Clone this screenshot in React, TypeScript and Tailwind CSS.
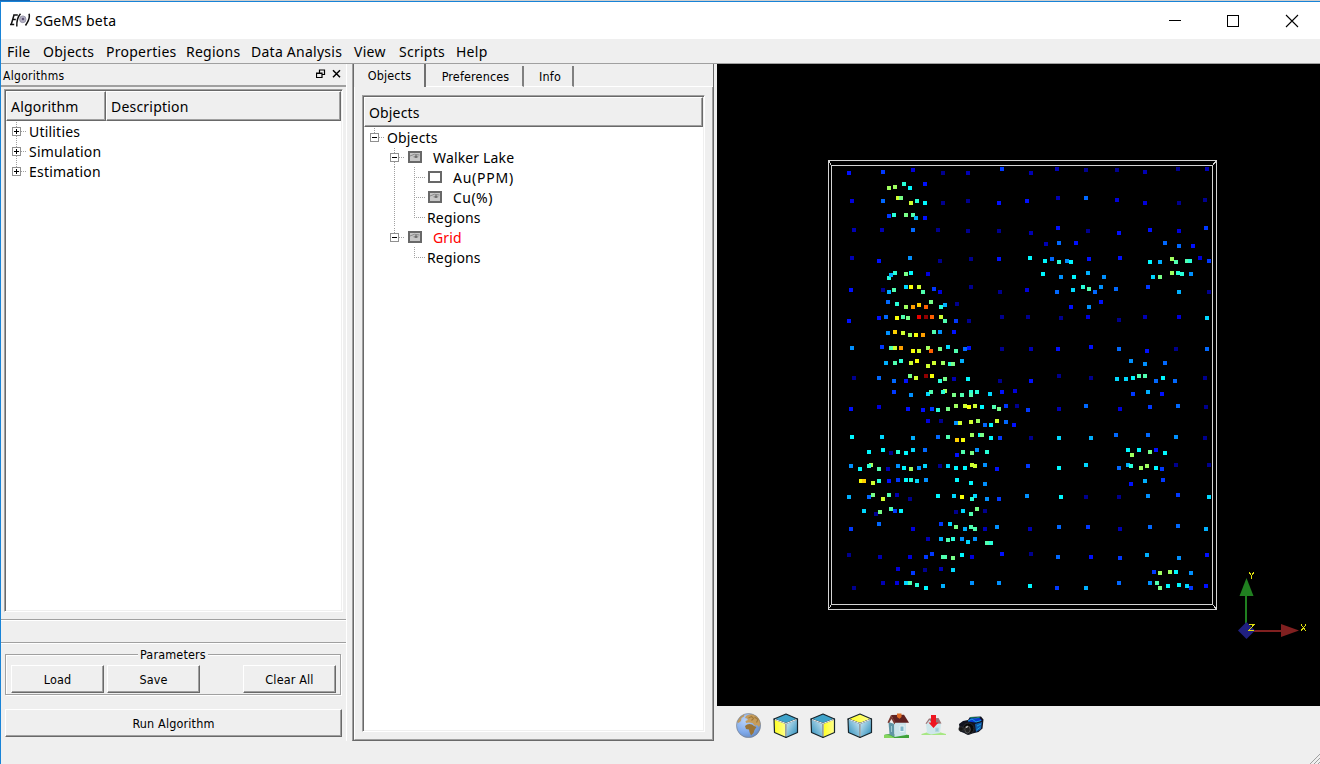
import React from "react";

const JET: Record<string, string> = {
  a: "#00008f", b: "#0000b4", c: "#0000dc", d: "#0010ff", e: "#0038ff", f: "#0068ff", g: "#0090ff",
  h: "#00b0ff", i: "#00d8ff", j: "#00f8ff", k: "#28ffd8", l: "#50ffb0", m: "#78ff88", n: "#a0ff60",
  o: "#d0ff30", p: "#f8ff08", q: "#ffd000", r: "#ffa000", s: "#ff6000", t: "#e80000", u: "#900000",
};

/* Sample positions, in thirds of a pixel from the origin of each tile; the letter is the colour class. */
const TILES = [
  {
    x: 820, y: 155,
    pts: "87,54,d 189,51,e 279,45,c 369,54,a 444,54,b 546,42,e 207,99,n 225,96,n 252,87,k 270,99,j 315,87,d 96,138,c 189,138,f 234,129,o 243,129,m 273,144,o 291,138,k 315,144,j 369,144,a 444,138,a 537,144,d 207,183,e 222,180,k 258,180,m 279,180,l 288,189,h 315,189,d 102,225,b 186,225,b 279,225,f 354,225,a 444,228,a 537,228,a 96,309,b 177,318,d 270,309,g 360,318,a 453,312,a 537,312,d 207,369,k 213,360,h 225,354,k 258,357,m 273,354,j 324,357,c 93,405,d 189,405,a 207,411,h 222,405,l 258,396,i 273,396,p 297,396,o 309,411,l 342,402,e 360,411,c 453,396,a 540,411,a 204,441,f 231,447,k 258,456,n 279,456,r 297,450,q 318,456,s 333,441,m 363,456,k 375,450,h 411,447,a",
  },
  {
    x: 1020, y: 155,
    pts: "33,54,b 111,42,b 198,45,a 291,45,a 375,51,b 474,42,a 561,42,b 21,138,d 114,129,b 198,129,f 291,135,c 375,144,c 477,144,a 555,135,a 33,234,b 114,219,d 204,228,a 297,234,d 390,225,d 477,228,c 558,219,e 78,267,b 117,264,f 168,264,d 435,264,f 477,273,f 519,273,d 30,309,j 75,318,j 96,312,f 117,321,k 141,318,g 153,321,j 207,312,d 300,309,d 390,321,j 420,321,h 456,312,n 468,321,l 501,318,l 510,318,k 540,309,c 567,318,e 69,357,j 123,366,g 162,366,j 204,354,h 252,366,g 399,366,i 420,366,m 456,354,n 474,354,k 486,357,k 513,357,g 21,405,c 111,411,f 159,405,i 189,396,k 207,402,l 225,411,f 243,396,g 288,402,f 384,396,e 477,411,h 567,411,a 153,456,d 207,456,g 243,441,d",
  },
  {
    x: 820, y: 310,
    pts: "87,33,d 177,24,d 198,21,f 231,24,p 249,21,l 264,24,m 297,21,t 318,21,u 336,21,s 363,21,o 375,33,l 408,33,e 447,33,a 546,21,a 204,69,g 225,66,q 249,69,o 270,75,n 288,75,p 309,75,r 342,66,l 360,66,g 402,66,d 96,114,g 186,111,e 213,114,l 225,114,o 243,114,r 279,123,p 297,123,o 324,114,n 333,123,s 360,117,m 384,111,i 408,123,l 435,117,f 447,114,d 546,117,a 198,159,h 225,159,l 243,153,k 273,159,o 291,153,p 324,168,o 342,159,o 369,159,n 390,162,k 399,162,m 426,153,h 102,204,a 177,204,f 222,213,f 258,213,d 270,198,m 288,204,o 318,198,u 336,198,p 360,213,k 375,207,m 402,207,b 444,207,j 540,213,a 222,246,e 273,255,g 324,252,i 333,246,l 375,243,n 369,246,k 402,255,m 426,255,l 453,246,k 453,255,l 471,246,k 510,252,i 546,246,d 585,243,c 93,297,d 177,291,c 264,297,d 309,300,d 336,297,e 354,300,k 384,297,m 408,288,n 435,288,o 447,291,p 465,288,o 486,291,j 522,291,l 537,297,m 558,288,e 591,288,a 324,333,c 363,333,a 408,339,g 420,339,o 453,336,o 474,333,n 495,345,f 513,345,j 531,333,o 558,336,f 582,345,d 96,381,j 186,381,i 279,384,h 354,381,f 384,381,l 411,390,q 429,390,p 456,375,n 480,375,j 486,375,m 513,384,j 540,384,e 147,426,j 189,420,j 213,429,a 234,426,k 258,429,j 279,420,i 315,420,f 411,435,d 429,426,l 456,429,m 471,420,g 501,426,k",
  },
  {
    x: 1020, y: 310,
    pts: "24,21,a 123,24,a 204,21,c 297,30,a 375,21,b 477,21,c 561,24,i 33,117,b 114,117,d 213,111,d 297,117,f 381,123,d 468,117,a 561,117,f 333,153,g 375,162,g 435,159,f 33,213,d 117,198,a 213,204,a 291,207,i 318,207,i 339,204,j 357,198,l 375,198,l 408,213,f 429,204,j 465,213,f 555,204,a 339,252,e 384,246,h 426,252,d 24,300,e 117,297,b 198,288,f 300,297,c 390,291,e 474,288,f 558,291,a 33,384,a 117,384,i 213,384,h 288,375,f 384,375,f 468,381,g 555,384,a 324,420,j 336,435,n 357,420,j 390,426,m 408,420,d 435,429,j",
  },
  {
    x: 820, y: 460,
    pts: "93,18,g 120,27,j 153,15,n 147,18,k 177,27,l 204,27,b 234,18,g 252,24,j 273,27,n 297,24,g 315,18,i 360,18,a 384,18,i 408,24,j 435,24,j 456,15,o 465,18,o 495,15,g 531,27,d 123,63,p 132,63,q 159,69,o 177,63,k 207,63,d 234,60,e 258,60,j 273,60,k 291,63,i 318,60,g 411,60,j 453,69,j 495,72,g 87,111,h 147,111,f 159,105,m 189,117,o 207,105,l 231,105,b 270,117,a 354,108,j 402,108,i 426,111,p 465,108,i 456,117,k 501,117,g 537,117,e 132,153,i 168,162,a 180,156,m 213,147,l 225,153,e 243,153,j 408,156,a 429,153,i 453,162,l 471,147,m 495,153,a 93,207,e 177,192,f 279,207,c 363,192,e 390,192,i 408,201,m 435,207,h 453,201,l 465,207,l 495,207,b 531,201,g 324,237,b 363,237,h 384,240,l 399,237,k 426,237,g 444,246,i 465,237,g 501,249,l 513,249,k 87,285,a 180,291,b 270,291,c 318,291,e 336,282,e 369,291,l 375,291,l 399,294,m 426,285,j 456,291,c 546,282,d 234,327,c 279,339,e 315,330,a 363,327,b 399,330,i 102,384,a 189,369,b 231,369,c 258,369,i 270,369,l 291,375,k 318,384,j 369,378,h 456,369,g 537,369,g",
  },
  {
    x: 1020, y: 460,
    pts: "24,18,e 117,24,j 198,15,i 297,24,f 324,15,h 333,18,k 363,24,n 381,18,n 408,24,j 426,27,e 468,15,a 567,15,a 333,72,d 375,63,h 429,60,e 21,108,g 123,111,j 198,111,a 297,111,a 384,108,g 474,105,e 567,111,i 30,207,b 117,201,f 204,201,e 300,207,b 390,201,f 474,198,f 558,207,h 33,282,a 114,291,f 213,291,d 300,294,e 381,285,h 477,294,g 561,285,d 402,336,e 420,339,n 450,336,n 468,336,j 513,339,g 30,378,j 111,384,e 198,384,h 297,369,f 390,369,g 411,369,l 420,384,m 444,378,j 477,375,j 501,378,i 513,384,e 558,378,d",
  },
];

const SAMPLES = TILES.flatMap((t) =>
  t.pts.split(" ").map((p) => {
    const [x, y, c] = p.split(",");
    return { x: t.x + Math.round(Number(x) / 3) - 2, y: t.y + Math.round(Number(y) / 3) - 2, fill: JET[c] };
  })
);

const MENU = [
  ["File", "w-[36px]"],
  ["Objects", "w-[63px]"],
  ["Properties", "w-[80px]"],
  ["Regions", "w-[65px]"],
  ["Data Analysis", "w-[103px]"],
  ["View", "w-[45px]"],
  ["Scripts", "w-[57px]"],
  ["Help", "w-[40px]"],
];

const SEGOE = "font-['Noto_Sans','Open_Sans',sans-serif]";
const TAHOMA = "font-['DejaVu_Sans_Condensed','DejaVu_Sans',sans-serif] [font-stretch:condensed]";

function AppIcon() {
  return (
    <svg width="22" height="16" viewBox="0 0 22 16" fill="none" stroke="#111" strokeWidth="1.500">
      <path d="M4.200 2h4.600M3.200 6.500h3.600M1 11.500h4.200M5 2 2.200 11.500" />
      <path d="M11.500 .8Q7.500 5 7.800 13.500" />
      <path d="M20 .8Q21.500 5.500 16.500 12.500" />
      <ellipse cx="13.800" cy="6.300" rx="3.200" ry="3.400" fill="#b5b2c4" stroke="#8d8aa0" strokeWidth=".8" />
      <circle cx="14" cy="6" r="1.300" fill="#5e5577" stroke="none" />
    </svg>
  );
}

function Expander({ open, up = true, down = true }: { open: boolean; up?: boolean; down?: boolean }) {
  return (
    <svg className="shrink-0" width="20" height="20" viewBox="0 0 20 20" shapeRendering="crispEdges">
      <g stroke="#a0a0a0" strokeDasharray="1 1">
        {up && <path d="M8.500 1v6" />}
        {down && <path d="M8.500 15v5" />}
        <path d="M13 10.500h6" />
      </g>
      <rect x="4.500" y="6.500" width="8" height="8" fill="#fff" stroke="#909090" />
      <path d={open ? "M6 10.500h5" : "M6 10.500h5M8.500 8v5"} stroke="#000" />
    </svg>
  );
}

function Branch({ kind }: { kind: "line" | "tee" | "end" | "none" }) {
  return (
    <svg className="shrink-0" width="20" height="20" viewBox="0 0 20 20" shapeRendering="crispEdges">
      <g stroke="#a0a0a0" strokeDasharray="1 1">
        {kind !== "none" && <path d={kind === "end" ? "M8.500 0v11" : "M8.500 0v20"} />}
        {(kind === "tee" || kind === "end") && <path d="M8 10.500h11" />}
      </g>
    </svg>
  );
}

function Eye({ on }: { on: boolean }) {
  return (
    <svg className="ml-[2px] mr-[11px] shrink-0" width="14" height="12" viewBox="0 0 14 12">
      <rect x="1" y="1" width="12" height="10" fill={on ? "#c6c6c6" : "#fff"} stroke="#686868" strokeWidth="2" />
      {on && (
        <>
          <path d="M2 5Q6 2 11.500 4" fill="none" stroke="#8a8a8a" />
          <path d="M4.500 5.800Q8 3.800 11 5.800 8 8.300 4.500 5.800Z" fill="#a0a0a0" />
          <circle cx="8" cy="5.700" r="1.400" fill="#707070" />
        </>
      )}
    </svg>
  );
}

const raised =
  "border border-t-white border-l-white border-r-[#696969] border-b-[#696969] shadow-[inset_-1px_-1px_0_#a0a0a0]";
const sunken =
  "border border-t-[#a0a0a0] border-l-[#a0a0a0] border-r-white border-b-white shadow-[inset_1px_1px_0_#696969,inset_-1px_-1px_0_#efefef]";

function Button({ className, children }: { className: string; children: React.ReactNode }) {
  return (
    <button className={`flex h-[28px] items-center justify-center bg-[#efefef] pt-[2px] ${raised} ${className}`}>{children}</button>
  );
}

function Header({ className, children }: { className: string; children: React.ReactNode }) {
  return <div className={`flex h-[30px] items-center bg-[#efefef] pl-[4px] ${raised} ${className}`}>{children}</div>;
}

function AlgorithmDock() {
  return (
    <section className="flex w-[346px] shrink-0 flex-col border-r border-white">
      <div className={`flex h-[23px] items-center border-b-2 border-[#a0a0a0] pl-[2px] text-[12px] ${TAHOMA}`}>
        <span className="pt-[3px] tracking-[0.3px]">Algorithms</span>
        <svg className="mb-[2px] ml-auto mr-[4px]" width="26" height="10" viewBox="0 0 26 10" fill="none" stroke="#000">
          <path d="M3.500 4V1h5v4.500H6.500M3 1h6M.5 4h5.500v4.500H.5ZM.5 4.500h5.500" strokeWidth="1.200" />
          <path d="m17 1.200 7 7m0-7-7 7" strokeWidth="1.500" />
        </svg>
      </div>
      <div className={`ml-[3px] mt-[2px] flex h-[523px] w-[339px] flex-col bg-white p-px text-[14px] tracking-[0.2px] ${sunken} ${SEGOE}`}>
        <div className="flex">
          <Header className="w-[100px]">Algorithm</Header>
          <Header className="w-[235px]">Description</Header>
        </div>
        <ul>
          {["Utilities", "Simulation", "Estimation"].map((n, i) => (
            <li key={n} className="flex h-5 items-center pl-[2px]">
              <Expander open={false} down={i < 2} />
              <span className="ml-px">{n}</span>
            </li>
          ))}
        </ul>
      </div>
      <div className="mt-[7px] h-[24px] border-y border-[#a0a0a0] shadow-[inset_0_1px_0_#fff,0_1px_0_#fff]" />
      <div className={`flex flex-col text-[12.5px] tracking-[0.15px] ${TAHOMA}`}>
        <fieldset className="relative ml-[4px] mt-[11px] flex h-[41px] w-[336px] items-start border border-[#a0a0a0] pl-[5px] pt-[10px] shadow-[inset_1px_1px_0_#fff,1px_1px_0_#fff]">
          <span className="absolute left-[132px] top-[-8px] bg-[#efefef] px-[2px] leading-[16px]">Parameters</span>
          <Button className="w-[93px]">Load</Button>
          <Button className="ml-[3px] w-[93px]">Save</Button>
          <Button className="ml-[43px] w-[93px]">Clear All</Button>
        </fieldset>
        <Button className="ml-[4px] mt-[14px] w-[337px]">Run Algorithm</Button>
      </div>
    </section>
  );
}

function ObjectTree() {
  return (
    <div className={`ml-[7px] mt-[8px] flex h-[637px] w-[343px] flex-col bg-white p-px text-[14px] tracking-[0.15px] ${sunken} ${SEGOE}`}>
      <Header className="w-full">Objects</Header>
      <ul className="[&>li]:flex [&>li]:h-5 [&>li]:items-center [&>li]:pl-[2px]">
        <li><Expander open down={false} /><span className="ml-px">Objects</span></li>
        <li><Branch kind="none" /><Expander open /><Eye on />Walker Lake</li>
        <li><Branch kind="none" /><Branch kind="line" /><Branch kind="tee" /><Eye on={false} /><span className="tracking-[0.75px]">Au(PPM)</span></li>
        <li><Branch kind="none" /><Branch kind="line" /><Branch kind="tee" /><Eye on /><span className="tracking-[0.45px]">Cu(%)</span></li>
        <li><Branch kind="none" /><Branch kind="line" /><Branch kind="end" /><span className="ml-px">Regions</span></li>
        <li><Branch kind="none" /><Expander open down={false} /><Eye on /><span className="text-[#ff0000]">Grid</span></li>
        <li><Branch kind="none" /><Branch kind="none" /><Branch kind="end" /><span className="ml-px">Regions</span></li>
      </ul>
    </div>
  );
}

function ObjectsPanel() {
  return (
    <section className="ml-[5px] flex h-[677px] w-[362px] shrink-0 flex-col border-x border-b border-l-[#a0a0a0] border-r-[#696969] border-b-[#696969] shadow-[inset_1px_0_0_#696969]">
      <div className={`flex h-[23px] items-start text-[12.5px] tracking-[0.15px] ${TAHOMA}`}>
        <div className="flex h-[23px] w-[73px] items-center justify-center border-r-2 border-[#707070] pl-[2px] pt-[2px]">Objects</div>
        <div className="mt-[2px] flex h-[21px] w-[98px] items-center justify-center border-b border-r-2 border-b-white border-r-[#808080] pl-[3px] pt-[3px]">Preferences</div>
        <div className="mt-[2px] flex h-[21px] w-[50px] items-center justify-center border-b border-r-2 border-b-white border-r-[#808080] pl-[4px] pt-[3px]">Info</div>
        <div className="mt-[22px] h-px flex-1 bg-white" />
      </div>
      <div className="ml-px flex-1 border-b border-l border-r border-b-[#a0a0a0] border-l-white border-r-[#a0a0a0]">
        <ObjectTree />
      </div>
    </section>
  );
}

function Viewport() {
  return (
    <svg className="block bg-black" width="603" height="642" viewBox="717 64 603 642">
      <g fill="none" stroke="#d4d4d4" shapeRendering="crispEdges">
        <rect x="828.500" y="160.500" width="388" height="448.500" />
        <rect x="831.500" y="165.500" width="381" height="439" />
        <path d="m828.500 160.500 3 5M1216.500 160.500l-4 5M828.500 609l3-4.500M1216.500 609l-4-4.500" />
      </g>
      <g shapeRendering="crispEdges">
        {SAMPLES.map((s, i) => (
          <rect key={i} x={s.x} y={s.y} width="4" height="4" fill={s.fill} />
        ))}
      </g>
      <path d="M1245 595h2v30h-2z" fill="#208020" />
      <path d="m1246.500 578 7 18h-14z" fill="#208020" />
      <path d="M1250 630h32v2h-32z" fill="#802020" />
      <path d="m1299 630.500-18 6.500v-13z" fill="#802020" />
      <path d="m1246.500 622 8.500 8.500-8.500 8.500-8.500-8.500z" fill="#202080" />
      <g fill="none" stroke="#dede10" shapeRendering="crispEdges">
        <path d="m1249 572 2.500 3.500 2.500-3.500M1251.500 575v4" />
        <path d="M1249 624.500h5l-5 6h5" />
        <path d="m1301 624.500 5 6.500m0-6.500-5 6.500" />
      </g>
    </svg>
  );
}

function Globe() {
  return (
    <svg width="26" height="26" viewBox="0 0 26 26">
      <defs>
        <radialGradient id="sea" cx=".35" cy=".3" r=".8">
          <stop offset="0" stopColor="#b8d2f8" /><stop offset=".6" stopColor="#7fa9ea" /><stop offset="1" stopColor="#6085bd" />
        </radialGradient>
      </defs>
      <circle cx="12.500" cy="12.500" r="12.300" fill="url(#sea)" />
      <path d="M10 3Q14 .2 19 2.200 24 5 24.500 11L23 14 21 12 19 13 16.500 10 13 9.500 10 10 9.500 8 12 7 11 5.500 9 5Z" fill="#c69d5c" />
      <path d="M9 13Q12 9.800 16 11.500L18 13 20.500 14 18.500 17 17.500 20 15 22.500 13.500 19 13 16.500 10 16Z" fill="#9a7436" />
      <path d="M1 9Q3.500 3 8.500 1.200L8 3.500 5.500 5 5 8 2.500 10Z" fill="#bd9a64" />
      <path d="m12.500 5 3-1.500 2 2-2 2m3-3.500 3.500 2.500-1.500 3" stroke="#a37a3a" strokeWidth="1.200" fill="none" />
      <circle cx="12.500" cy="12.500" r="12" fill="none" stroke="#8b806e" strokeOpacity=".5" />
    </svg>
  );
}

function Cube({ face }: { face: "left" | "right" | "top" }) {
  const fill = (f: string) => (face === f ? "url(#cubeY)" : f === "top" ? "#3fa3ca" : f === "left" ? "url(#cubeB)" : "url(#cubeC)");
  return (
    <svg width="26" height="26" viewBox="0 0 26 26">
      <defs>
        <linearGradient id="cubeB" x1="0" y1="1" x2="1" y2="0"><stop stopColor="#2389b8" /><stop offset="1" stopColor="#d9eef8" /></linearGradient>
        <linearGradient id="cubeC" x1="0" y1="0" x2="1" y2="1"><stop stopColor="#d9eef8" /><stop offset="1" stopColor="#2389b8" /></linearGradient>
        <linearGradient id="cubeY" x1="0" x2="1"><stop stopColor="#ffff20" /><stop offset="1" stopColor="#ffff90" /></linearGradient>
      </defs>
      <g stroke="#17252c" strokeWidth="1.200" strokeLinejoin="round">
        <path d="m1 6 12-5 11.500 5L13 10.500Z" fill={fill("top")} />
        <path d="m1 6 12 4.500v14L1.500 19.500Z" fill={fill("left")} />
        <path d="M24.500 6 13 10.500v14l11.500-5Z" fill={fill("right")} />
      </g>
      <path d="m2 6.500 11 4 10.500-4M13 10.500v13" fill="none" stroke="#e8eef0" strokeWidth="1.100" />
    </svg>
  );
}

function House() {
  return (
    <svg width="26" height="26" viewBox="0 0 26 26">
      <path d="M0 22q6-2 25 0v3H0Z" fill="#3fa23a" />
      <path d="M0 22q6-1 10 2.500v.5H0Z" fill="#85d65d" />
      <path d="m4.500 9 6 2v13l-5-2.500z" fill="#5f95a4" />
      <path d="M10 9h12v13l-11.500 2z" fill="#cbe3ea" />
      <path d="m7 2 13-.3 5 8H11Z" fill="#602222" />
      <path d="M7 2 3.500 9.500l1.500.5L7.500 6l3 5.500L11.500 9Z" fill="#7a3830" />
      <path d="M13 .5h4.500V4l-2 1.800L13 4z" fill="#df6b25" />
      <path d="M16 13h4v5.500h-4z" fill="#7db5c9" stroke="#e5f2f5" />
      <path d="M7.500 13v6" stroke="#9cc6d0" />
    </svg>
  );
}

function SetHome() {
  return (
    <svg width="26" height="26" viewBox="0 0 26 26">
      <path d="M.5 21q12-5 24.500 0v1H.5Z" fill="#a7e783" />
      <path d="m5 11 3-5 9-1 3 6-1 9-9 1.500-4-1.500Z" fill="#cfe7eb" />
      <path d="m4.500 10.500 3.500-5 9.500-.5 3 5.500-9 .5-3-4-3 4Z" fill="#9c7476" />
      <path d="M14.500 15h3v3.500h-3z" stroke="#b5d7df" fill="#9ccad8" />
      <path d="M10 2h5v7.500h2.500l-5 5.500-5-5.500h2.500Z" fill="#ee1620" />
    </svg>
  );
}

function CameraIcon() {
  return (
    <svg width="26" height="26" viewBox="0 0 26 26">
      <path d="m1 11 4-3 5-1 2-3 11-.5 2.500 3-1 9-4 3.500-6 1.500-4.500 1.500-4-2-4-1.500Z" fill="#10131f" />
      <path d="m12 5.500 9-1 3 3-7 2-7-1Z" fill="#0a3ad0" />
      <path d="m17 11 7-2-1 7-5 3Z" fill="#1259a8" />
      <path d="m10 8 4-2 4 3 5-1.500M19 13l4-2M18.500 17l4-3" stroke="#18a0e0" fill="none" />
      <path d="m12 4.500 6 .5 4-1" stroke="#20c080" fill="none" strokeWidth=".7" />
      <circle cx="10.500" cy="15.500" r="5.500" fill="#090909" stroke="#2a2d33" />
      <ellipse cx="9.500" cy="16.500" rx="2.800" ry="3.500" fill="#222" stroke="#777" strokeWidth=".6" />
      <path d="m8 14.500 1.800-1" stroke="#ddd" strokeWidth="1.200" />
      <circle cx="3" cy="16" r="2.300" fill="#151515" stroke="#444" strokeWidth=".5" />
    </svg>
  );
}

export default function App() {
  return (
    <div className="flex h-[764px] w-[1320px] flex-col overflow-hidden bg-[#efefef] text-black antialiased">
      <div className="flex h-px bg-[#cfcfcf]"><div className="w-[30px] bg-[#1a66b0]" /></div>
      <div className="flex min-h-0 flex-1 flex-col border-l border-t border-[#1883d7]">
        <header className={`flex h-[37px] shrink-0 items-center bg-white pl-[8px] ${SEGOE}`}>
          <AppIcon />
          <span className="ml-[4px] text-[14px] tracking-[0.2px]">SGeMS beta</span>
          <svg className="ml-auto mr-[21px]" width="130" height="14" viewBox="0 0 130 14" fill="none" stroke="#000" shapeRendering="crispEdges">
            <path d="M0 6.500h12" />
            <rect x="58.500" y="1.500" width="11" height="11" />
            <path d="m117 1 12 12m0-12-12 12" shapeRendering="auto" strokeWidth="1.100" />
          </svg>
        </header>
        <nav className={`flex h-[25px] shrink-0 items-center border-b border-[#a0a0a0] pl-[6px] text-[14px] tracking-[0.25px] ${SEGOE}`}>
          {MENU.map(([label, width]) => (
            <span key={label} className={`whitespace-nowrap ${width}`}>{label}</span>
          ))}
        </nav>
        <main className="flex min-h-0 flex-1">
          <div className="flex h-[677px]">
            <AlgorithmDock />
            <ObjectsPanel />
          </div>
          <div className="ml-[3px] flex w-[603px] shrink-0 flex-col">
            <Viewport />
            <div className="flex gap-[11px] pl-[19px] pt-[7px]">
              <Globe />
              <Cube face="left" />
              <Cube face="right" />
              <Cube face="top" />
              <House />
              <SetHome />
              <CameraIcon />
            </div>
            <svg className="ml-auto mt-auto" width="10" height="10" viewBox="0 0 10 10" stroke="#a0a0a0">
              <path d="m0 10 10-10M4 10l6-6M8 10l2-2" />
            </svg>
          </div>
        </main>
      </div>
    </div>
  );
}
